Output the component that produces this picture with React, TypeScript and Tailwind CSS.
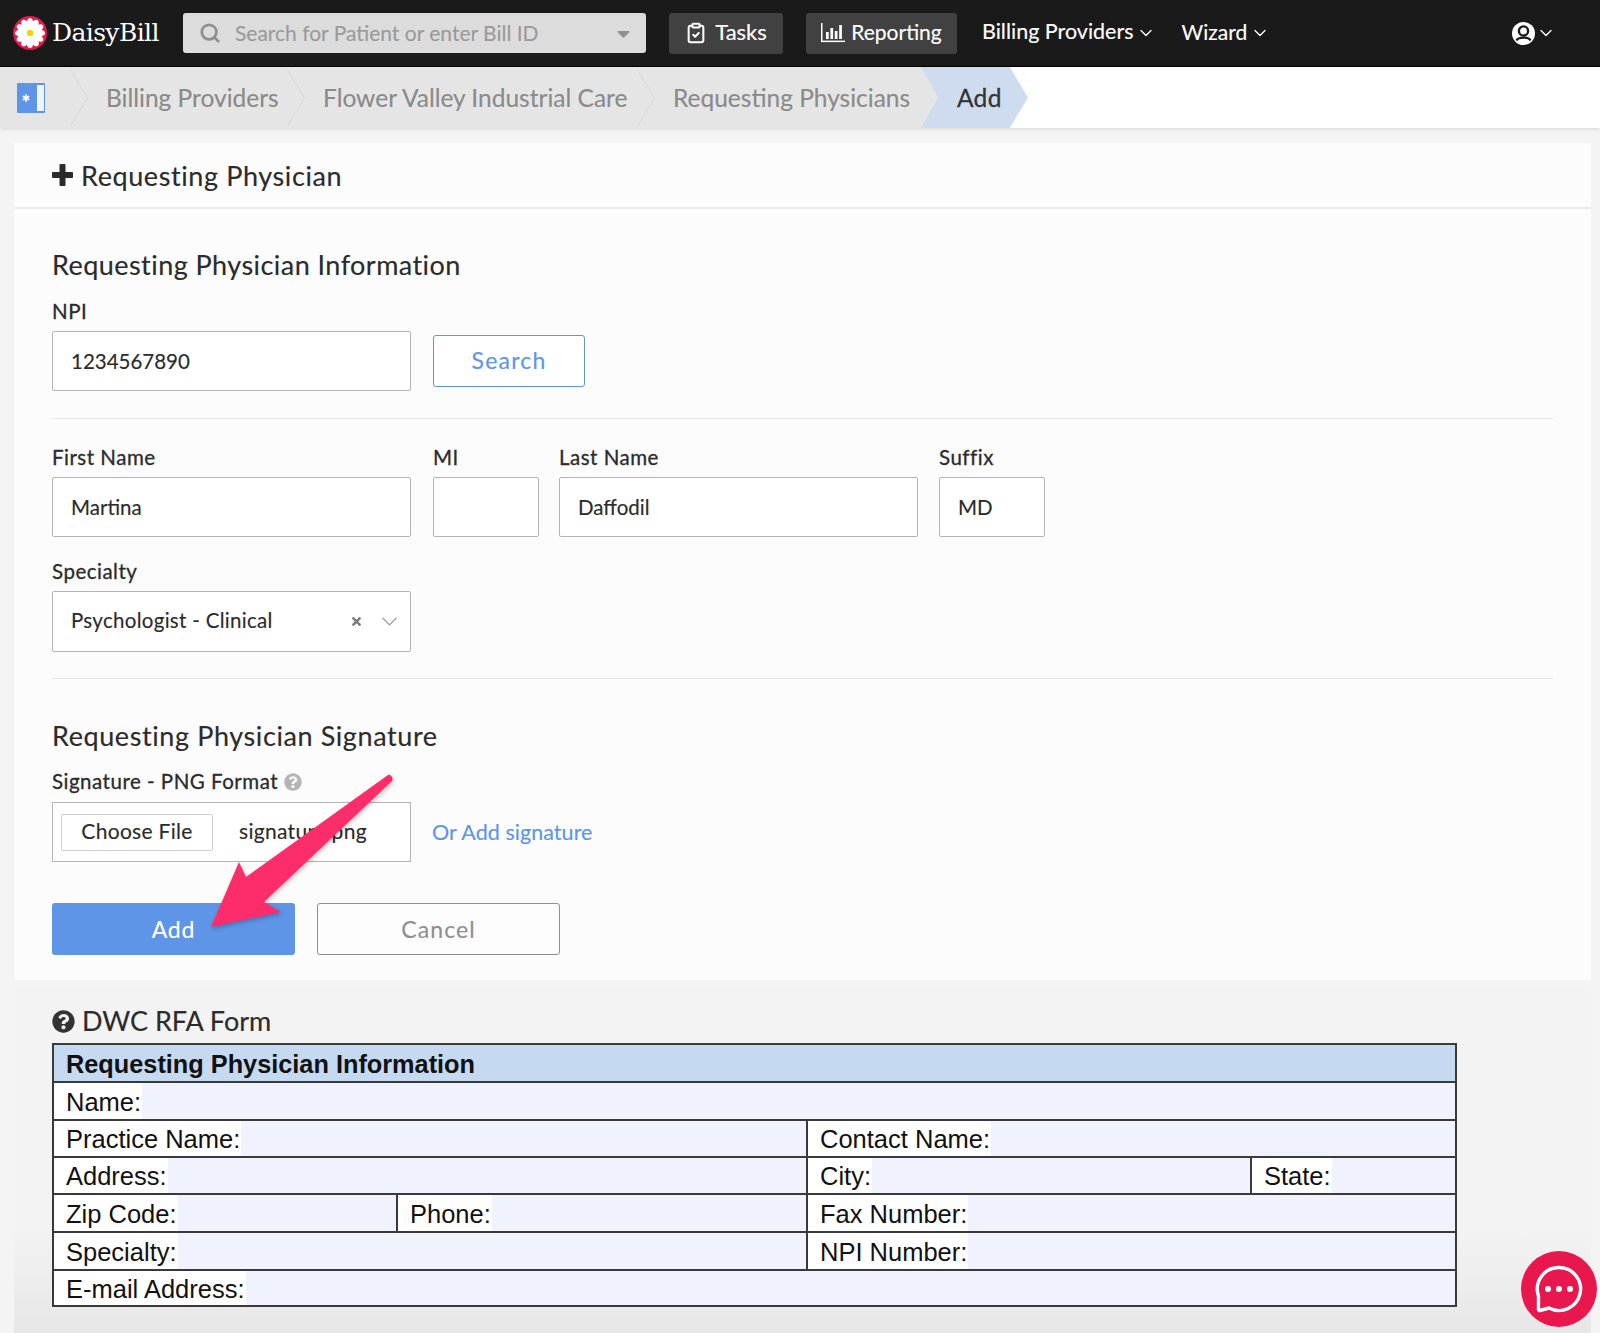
import React from "react";
import { Asterisk, ChevronDown, ClipboardCheck, Search } from "lucide-react";
import { FaQuestionCircle, FaTimes, FaCaretDown } from "react-icons/fa";

const sans = "font-['Lato','Open_Sans',sans-serif]";

function Logo() {
  const petals = Array.from({ length: 12 }, (_, i) => i * 30);
  return (
    <svg width="34" height="34" viewBox="0 0 34 34" className="shrink-0">
      <circle cx="17" cy="17" r="17" fill="#e8184f" />
      {petals.map((a) => (
        <ellipse key={a} cx="17" cy="8.5" rx="3.6" ry="6.6" fill="#fff" transform={`rotate(${a} 17 17)`} />
      ))}
      <circle cx="17" cy="17" r="3.2" fill="#fbd20a" />
    </svg>
  );
}

function BarsIcon() {
  return (
    <svg width="24" height="20" viewBox="0 0 24 20" className="shrink-0" fill="#fff">
      <rect x="0" y="0" width="1.5" height="19" />
      <rect x="0" y="17.6" width="24" height="1.5" />
      <rect x="5" y="9" width="2.7" height="7" />
      <rect x="9.4" y="5" width="2.7" height="11" />
      <rect x="13.8" y="8" width="2.7" height="8" />
      <rect x="18.2" y="2" width="2.7" height="14" />
    </svg>
  );
}

function UserIcon() {
  return (
    <svg width="23" height="23" viewBox="0 0 23 23" className="shrink-0">
      <circle cx="11.5" cy="11.5" r="11.5" fill="#fff" />
      <circle cx="11.5" cy="9" r="4.6" fill="#fff" stroke="#1a1a1a" strokeWidth="2.4" />
      <path d="M4.5 18.5 C6 14.6 17 14.6 18.5 18.5" fill="#fff" stroke="#1a1a1a" strokeWidth="2.2" />
    </svg>
  );
}

function PlusIcon() {
  return (
    <svg width="21" height="22" viewBox="0 0 21 22" className="shrink-0" fill="#2b2b2b">
      <rect x="7.5" y="0" width="6" height="22" rx="1" />
      <rect x="0" y="8" width="21" height="6" rx="1" />
    </svg>
  );
}

function Sep() {
  return (
    <svg width="18" height="58" viewBox="0 0 18 58" className="shrink-0" fill="none">
      <path d="M0.5 1 L17.5 29 L0.5 57" stroke="#d6d6d6" strokeWidth="1" />
    </svg>
  );
}

function Crumb({ children, w }: { children: string; w: string }) {
  return <span className={`ml-[18px] pt-[2px] text-[24.5px] text-[#8a8a8a] whitespace-nowrap ${w}`}>{children}</span>;
}

function Label({ children }: { children: React.ReactNode }) {
  return (
    <div className="h-[22px] leading-[20px] text-[20.5px] tracking-[0.5px] [-webkit-text-stroke:0.3px] text-[#2b2b2b] whitespace-nowrap">
      {children}
    </div>
  );
}

function Field({ w, value }: { w: string; value?: string }) {
  return (
    <div className={`${w} h-[60px] mt-2 bg-white border border-[#b4b4b4] rounded-[2px] pl-[18px] flex items-center text-[20.5px] text-[#2b2b2b]`}>
      {value}
    </div>
  );
}

function Cell({ label, className = "" }: { label: string; className?: string }) {
  return (
    <div className={`flex items-stretch min-w-0 ${className}`}>
      <div className="pl-[12px] pr-[1px] pt-[2px] bg-white flex items-center whitespace-nowrap">{label}</div>
      <div className="flex-1 bg-[#f0f3fe]" />
    </div>
  );
}

function Row({ h, children }: { h: string; children: React.ReactNode }) {
  return <div className={`flex border-b-2 border-[#3a3a3a] ${h}`}>{children}</div>;
}

export default function App() {
  return (
    <div className={`relative w-[1600px] h-[1333px] overflow-hidden bg-[#f4f4f4] [-webkit-text-stroke:0.15px] ${sans}`}>
      {/* Top bar */}
      <header className="h-[67px] bg-[#1a1a1a] border-b border-black flex items-center pl-[13px]">
        <div className="w-[170px] flex items-center gap-[5px] shrink-0">
          <Logo />
          <span className="font-['DejaVu_Serif',serif] text-[25px] text-white tracking-[-0.6px] [-webkit-text-stroke:0px]">DaisyBill</span>
        </div>
        <div className="w-[463px] h-[40px] bg-[#dcdcdc] rounded-[3px] flex items-center pl-[16px] pr-[12px] shrink-0">
          <Search size={22} strokeWidth={3} className="text-[#8f8f8f]" />
          <span className="ml-[14px] pb-[1px] flex-1 text-[21px] text-[#9a9a9a] whitespace-nowrap">Search for Patient or enter Bill ID</span>
          <FaCaretDown size={21} className="text-[#8f8f8f]" />
        </div>
        <div className="ml-[23px] w-[114px] h-[41px] bg-[#414141] rounded-[3px] flex items-center justify-center gap-[8px] text-white text-[22px]">
          <ClipboardCheck size={22} strokeWidth={2.2} />
          <span className="pb-[3px]">Tasks</span>
        </div>
        <div className="ml-[23px] w-[151px] h-[41px] bg-[#414141] rounded-[3px] flex items-center justify-center gap-[6px] text-white text-[21px]">
          <BarsIcon />
          <span className="pb-[3px]">Reporting</span>
        </div>
        <div className="ml-[25px] flex items-center gap-[2px] text-white text-[21.5px] whitespace-nowrap">
          <span className="pb-[3px]">Billing Providers</span>
          <ChevronDown size={20} strokeWidth={1.6} />
        </div>
        <div className="ml-[26px] flex items-center gap-[3px] text-white text-[21px] whitespace-nowrap">
          <span className="pb-[3px]">Wizard</span>
          <ChevronDown size={20} strokeWidth={1.6} />
        </div>
        <div className="ml-auto mr-[44px] flex items-center gap-[1px] text-white">
          <UserIcon />
          <ChevronDown size={20} strokeWidth={1.6} />
        </div>
      </header>

      {/* Breadcrumb */}
      <nav className="h-[61px] bg-white flex items-stretch shadow-[0_1px_4px_rgba(0,0,0,0.12)] relative">
        <div className="w-[938px] bg-[#e5e5e5] shrink-0 flex items-center pl-[17px]">
          <div className="w-[28px] h-[30px] bg-[#5e95e6] rounded-[1px] shrink-0 flex items-center pl-[3px] relative text-white">
            <Asterisk size={12} strokeWidth={3.5} />
            <span className="absolute right-[1px] top-[2px] bottom-[2px] w-[7px] bg-white opacity-90" />
          </div>
          <div className="ml-[25px]"><Sep /></div>
          <Crumb w="w-[181px]">Billing Providers</Crumb>
          <Sep />
          <Crumb w="w-[314px]">Flower Valley Industrial Care</Crumb>
          <Sep />
          <Crumb w="">Requesting Physicians</Crumb>
        </div>
        <div className="-ml-[17px] w-[107px] bg-[#cfdcf0] shrink-0 [clip-path:polygon(0_0,83%_0,100%_50%,83%_100%,0_100%,16%_50%)] flex items-center pl-[36px] pt-[2px] text-[24.5px] tracking-[0.3px] [-webkit-text-stroke:0.3px] text-[#333]">
          Add
        </div>
      </nav>

      {/* Form panel */}
      <main className="mx-[14px] mt-[15px] bg-[#fcfcfc] w-[1577px]">
        <div className="h-[66px] border-b-2 border-[#ebebeb] pl-[38px] flex items-center gap-[8px] text-[27px] tracking-[0.6px] text-[#2b2b2b]">
          <PlusIcon />
          <span className="pt-[2px]">Requesting Physician</span>
        </div>
        <div className="px-[38px] pt-[40px] pb-[25px]">
          <h2 className="h-[32px] leading-[32px] text-[27px] tracking-[0.45px] text-[#2b2b2b]">Requesting Physician Information</h2>
          <div className="mt-5"><Label>NPI</Label></div>
          <div className="flex items-center gap-[22px]">
            <Field w="w-[359px]" value="1234567890" />
            <div className="mt-2 w-[152px] h-[52px] border border-[#5e95e6] rounded-[3px] bg-white flex items-center justify-center pb-[1px] text-[23px] tracking-[1.2px] text-[#5e95e6]">Search</div>
          </div>
          <div className="mt-[27px] h-px bg-[#e6e6e6] w-[1501px]" />

          <div className="mt-[28px] flex">
            <div className="w-[359px]"><Label>First Name</Label><Field w="w-[359px]" value="Martina" /></div>
            <div className="ml-[22px] w-[106px]"><Label>MI</Label><Field w="w-[106px]" /></div>
            <div className="ml-[20px] w-[359px]"><Label>Last Name</Label><Field w="w-[359px]" value="Daffodil" /></div>
            <div className="ml-[21px] w-[106px]"><Label>Suffix</Label><Field w="w-[106px]" value="MD" /></div>
          </div>

          <div className="mt-[24px]"><Label>Specialty</Label></div>
          <div className="w-[359px] h-[61px] mt-[8px] bg-white border border-[#b4b4b4] rounded-[2px] pl-[18px] pr-[7px] flex items-center text-[20.5px] tracking-[0.3px] text-[#2b2b2b]">
            <span className="flex-1 pb-[2px]">Psychologist - Clinical</span>
            <FaTimes size={13} className="text-[#7a7a7a] mr-[13px]" />
            <ChevronDown size={27} strokeWidth={1.2} className="text-[#9a9a9a]" />
          </div>
          <div className="mt-[26px] h-px bg-[#e6e6e6] w-[1501px]" />

          <h2 className="mt-[41px] h-[32px] leading-[32px] text-[27px] tracking-[0.6px] text-[#2b2b2b]">Requesting Physician Signature</h2>
          <div className="mt-[19px] flex items-center gap-[6px]">
            <Label>Signature - PNG Format</Label>
            <FaQuestionCircle size={18} className="text-[#b5b5b5]" />
          </div>
          <div className="mt-[9px] flex items-center gap-[21px]">
            <div className="w-[359px] h-[60px] bg-white border border-[#b4b4b4] flex items-center pl-[8px] text-[21px] tracking-[0.3px] text-[#2b2b2b]">
              <div className="w-[152px] h-[37px] border border-[#cfcfcf] rounded-[2px] flex items-center justify-center pb-[3px]">Choose File</div>
              <span className="ml-[26px] pb-[3px]">signature.png</span>
            </div>
            <span className="text-[21.5px] tracking-[0.05px] text-[#5e95e6]">Or Add signature</span>
          </div>
          <div className="mt-[41px] flex gap-[22px]">
            <div className="w-[243px] h-[52px] bg-[#5e95e6] rounded-[3px] flex items-center justify-center text-[23px] tracking-[0.8px] text-white">Add</div>
            <div className="w-[243px] h-[52px] border border-[#8f8f8f] rounded-[3px] bg-[#fdfdfd] flex items-center justify-center text-[23px] tracking-[1.1px] text-[#8f8f8f]">Cancel</div>
          </div>
        </div>
      </main>

      {/* RFA form */}
      <section className="mx-[14px] mt-[6px] w-[1577px] h-[347px] bg-gradient-to-b from-[#f3f3f3] from-70% to-[#e7e7e7] pl-[38px] pt-[20px]">
        <div className="h-[30px] flex items-center gap-[7px] text-[27px] text-[#2b2b2b]">
          <FaQuestionCircle size={23} className="text-[#333]" />
          <span>DWC RFA Form</span>
        </div>
        <div className="mt-[7px] w-[1405px] border-t-2 border-l-2 border-r-2 border-[#3a3a3a] font-['Liberation_Sans',Arial,sans-serif] text-[25.5px] text-[#111] [-webkit-text-stroke:0px]">
          <Row h="h-[38px]">
            <div className="flex-1 bg-[#c5d9f0] pl-[12px] pt-[3px] flex items-center font-bold text-[25.3px]">Requesting Physician Information</div>
          </Row>
          <Row h="h-[38px]"><Cell label="Name:" className="flex-1" /></Row>
          <Row h="h-[37px]">
            <Cell label="Practice Name:" className="w-[754px] border-r-2 border-[#3a3a3a]" />
            <Cell label="Contact Name:" className="flex-1" />
          </Row>
          <Row h="h-[37px]">
            <Cell label="Address:" className="w-[754px] border-r-2 border-[#3a3a3a]" />
            <Cell label="City:" className="w-[444px] border-r-2 border-[#3a3a3a]" />
            <Cell label="State:" className="flex-1" />
          </Row>
          <Row h="h-[38px]">
            <Cell label="Zip Code:" className="w-[344px] border-r-2 border-[#3a3a3a]" />
            <Cell label="Phone:" className="w-[410px] border-r-2 border-[#3a3a3a]" />
            <Cell label="Fax Number:" className="flex-1" />
          </Row>
          <Row h="h-[38px]">
            <Cell label="Specialty:" className="w-[754px] border-r-2 border-[#3a3a3a]" />
            <Cell label="NPI Number:" className="flex-1" />
          </Row>
          <Row h="h-[36px]"><Cell label="E-mail Address:" className="flex-1" /></Row>
        </div>
      </section>

      {/* Annotation arrow */}
      <svg className="absolute left-[200px] top-[770px] drop-shadow-[1px_2px_2px_rgba(0,0,0,0.25)]" width="200" height="165" viewBox="200 770 200 165">
        <path
          d="M388 775 C390 774 394 778 392 781 L264 902 L281 912 L211 927 L239 862 L246 877 Z"
          fill="#fd2d6b"
        />
      </svg>

      {/* Chat bubble */}
      <div className="absolute left-[1521px] top-[1251px] w-[76px] h-[76px] rounded-full bg-[#e8184f] flex items-center justify-center">
        <svg width="48" height="48" viewBox="0 0 48 48" fill="none">
          <path d="M24 2.5 A21.5 21.5 0 1 1 14 43 L5 45.5 C4 45.8 3.4 45 3.5 44 L3.5 31 A21.5 21.5 0 0 1 24 2.5Z" stroke="#fff" strokeWidth="3.4" strokeLinejoin="round" />
          <circle cx="13" cy="24" r="3" fill="#fff" />
          <circle cx="24" cy="24" r="3" fill="#fff" />
          <circle cx="35" cy="24" r="3" fill="#fff" />
        </svg>
      </div>
    </div>
  );
}
